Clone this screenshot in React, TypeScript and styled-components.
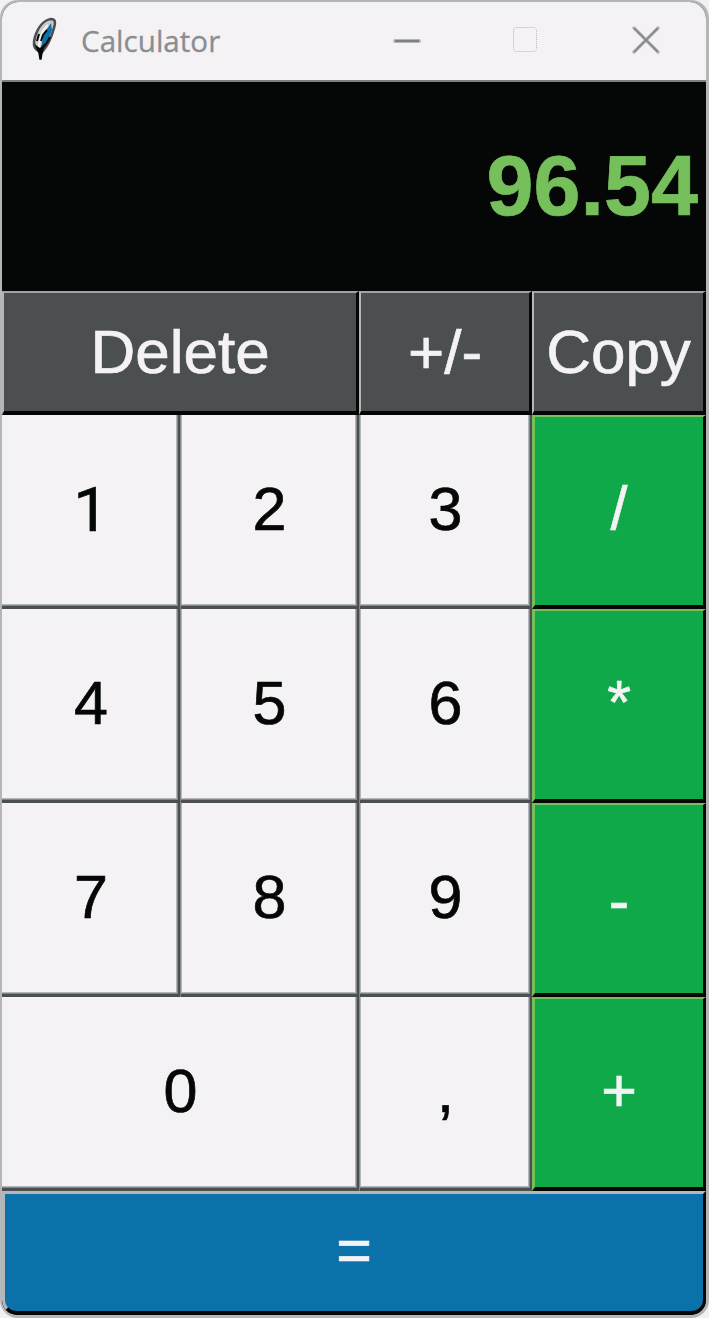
import React from "react";
import styled, { createGlobalStyle, css } from "styled-components";

const GlobalStyle = createGlobalStyle`
  * { box-sizing: border-box; }
  body { margin: 0; background: #f1f0f2; }
  #root { height: 1318px; overflow: hidden; }
`;

const Window = styled.main`
  width: 709px;
  height: 1318px;
  padding: 2px 3px 3px 2px;
  background: #b4b7ba;
  border-radius: 18px;
  font-family: "Liberation Sans", Arial, sans-serif;
`;

const Frame = styled.div`
  display: flex;
  flex-direction: column;
  width: 704px;
  height: 1313px;
  overflow: hidden;
  background: #050706;
  border-radius: 17px 17px 15px 15px;
`;

const TitleBar = styled.header`
  display: flex;
  align-items: center;
  height: 80px;
  flex: none;
  padding: 0 46px 2px 28px;
  background: #f4f2f4;
  border-bottom: 2px solid #7d7f80;
`;

const Title = styled.h1`
  flex: 1;
  margin: 0 0 0 21px;
  font: 400 29.6px "Open Sans", "Noto Sans", sans-serif;
  color: #8b8e90;
  -webkit-text-stroke: 0.3px #8b8e90;
`;

const Controls = styled.div`
  display: flex;
  align-items: center;
  gap: 90px;
`;

const ControlButton = styled.button`
  display: flex;
  padding: 0;
  border: 0;
  background: none;

  &:last-child {
    margin-left: 3px;
  }
`;

const Display = styled.output`
  display: flex;
  align-items: center;
  justify-content: flex-end;
  height: 209px;
  flex: none;
  padding: 0 8px 1px 0;
  background: #050706;
  color: #76c05c;
  font-size: 84.5px;
  font-weight: 700;
  line-height: 1;
  -webkit-text-stroke: 0.7px #76c05c;
`;

const Keypad = styled.div`
  display: grid;
  grid-template-columns: 178px 179px 173px 174px;
  grid-template-rows: 124px 194px 194px 194px 194px 124px;
`;

type Tone = "function" | "digit" | "operator" | "equals";

const tones = {
  function: css`
    background: #4b4f50;
    color: #f4f2f4;
    border-style: solid;
    border-width: 2px 3px 4px 2px;
    border-color: #a0a3a5 #050706 #050706 #b4b7ba;
    font-size: 62px;
    padding-bottom: 1px;
  `,
  digit: css`
    background: #f4f2f4;
    color: #050706;
    box-shadow:
      inset 1px 0 0 #848688,
      inset -2px -3px 0 #4b4f50,
      inset -3px -4px 0 #848688,
      inset -4px -5px 0 #b4b7ba,
      inset 2px 0 0 #b4b7ba;
  `,
  operator: css`
    background: #10a94a;
    color: #f4f2f4;
    border-style: solid;
    border-width: 2px 3px 4px 3px;
    border-color: #76c05c #050706 #050706 #76c05c;
  `,
  equals: css`
    background: #0a71aa;
    color: #f4f2f4;
    border-style: solid;
    border-width: 3px 3px 4px 3px;
    border-color: #b4b7ba #050706 #050706 #b4b7ba;
    border-radius: 0 0 15px 15px;
  `,
};

const Key = styled.button<{ $tone: Tone; $span?: number; $edge?: boolean }>`
  display: flex;
  align-items: center;
  justify-content: center;
  min-width: 0;
  padding: 0 0 5px;
  border: 0;
  grid-column: span ${(p) => p.$span ?? 1};
  font-family: "Liberation Sans", Arial, sans-serif;
  font-size: 61px;
  line-height: 1;
  -webkit-text-stroke: 0.7px currentColor;
  ${(p) => tones[p.$tone]}
  ${(p) =>
    p.$edge &&
    css`
      box-shadow:
        inset -2px -3px 0 #4b4f50,
        inset -3px -4px 0 #848688,
        inset -4px -5px 0 #b4b7ba;
    `}
`;

const PlainOne = styled.span`
  font-family: Roboto, sans-serif;
  font-size: 62px;
`;

const LowMinus = styled.span`
  padding-top: 9px;
`;

interface KeyDef {
  label: string;
  tone: Tone;
  span?: number;
  edge?: boolean;
  glyph?: React.ReactNode;
}

const keys: KeyDef[] = [
  { label: "Delete", tone: "function", span: 2 },
  { label: "+/-", tone: "function" },
  { label: "Copy", tone: "function" },
  { label: "1", tone: "digit", edge: true, glyph: <PlainOne>1</PlainOne> },
  { label: "2", tone: "digit" },
  { label: "3", tone: "digit" },
  { label: "/", tone: "operator" },
  { label: "4", tone: "digit", edge: true },
  { label: "5", tone: "digit" },
  { label: "6", tone: "digit" },
  { label: "*", tone: "operator" },
  { label: "7", tone: "digit", edge: true },
  { label: "8", tone: "digit" },
  { label: "9", tone: "digit" },
  { label: "-", tone: "operator", glyph: <LowMinus>-</LowMinus> },
  { label: "0", tone: "digit", span: 2, edge: true },
  { label: ",", tone: "digit" },
  { label: "+", tone: "operator" },
  { label: "=", tone: "equals", span: 4 },
];

const Feather = () => (
  <svg width="30" height="46" viewBox="0 0 30 46" fill="none">
    <path d="M9 34C4 32 3 27 5 20C8 10 14 3 21 2C25 2 26 5 24 11C21 22 18 29 12 35Z" fill="#c9cbcd" stroke="#4b4f50" strokeWidth="2.6" />
    <path d="M21 6L16 13L13 20L11 31L18 24L22 13Z" fill="#0a71aa" />
    <path d="M18 8L13 14L10 22L9 30" stroke="#f4f2f4" strokeWidth="2.4" />
    <path d="M17 13L13 18L11 24M9 17L7 24M20 20L16 27L12 32" stroke="#050706" strokeWidth="2" />
    <path d="M6 29L10 32L14 28L12 36L11 42L10 42L9 36Z" fill="#050706" stroke="#050706" strokeWidth="1.4" />
  </svg>
);

export default function App() {
  return (
    <>
      <GlobalStyle />
      <Window>
        <Frame>
          <TitleBar>
            <Feather />
            <Title>Calculator</Title>
            <Controls>
              <ControlButton aria-label="Minimize">
                <svg width="28" height="28" viewBox="0 0 28 28">
                  <path d="M2 15H26" stroke="#b4b7ba" strokeWidth="4" strokeLinecap="round" />
                  <path d="M2 15H26" stroke="#7d7f80" strokeWidth="2" />
                </svg>
              </ControlButton>
              <ControlButton aria-label="Maximize">
                <svg width="28" height="28" viewBox="0 0 28 28">
                  <rect x="2.5" y="1.5" width="23" height="24" rx="3" fill="none" stroke="#b4b7ba" strokeDasharray="1 1" />
                </svg>
              </ControlButton>
              <ControlButton aria-label="Close">
                <svg width="28" height="28" viewBox="0 0 28 28">
                  <path d="M2 2L26 26M26 2L2 26" stroke="#b4b7ba" strokeWidth="3.4" strokeLinecap="round" />
                  <path d="M2 2L26 26M26 2L2 26" stroke="#7d7f80" strokeWidth="1.5" />
                </svg>
              </ControlButton>
            </Controls>
          </TitleBar>
          <Display>96.54</Display>
          <Keypad>
            {keys.map((key) => (
              <Key key={key.label} $tone={key.tone} $span={key.span} $edge={key.edge}>
                {key.glyph ?? key.label}
              </Key>
            ))}
          </Keypad>
        </Frame>
      </Window>
    </>
  );
}
